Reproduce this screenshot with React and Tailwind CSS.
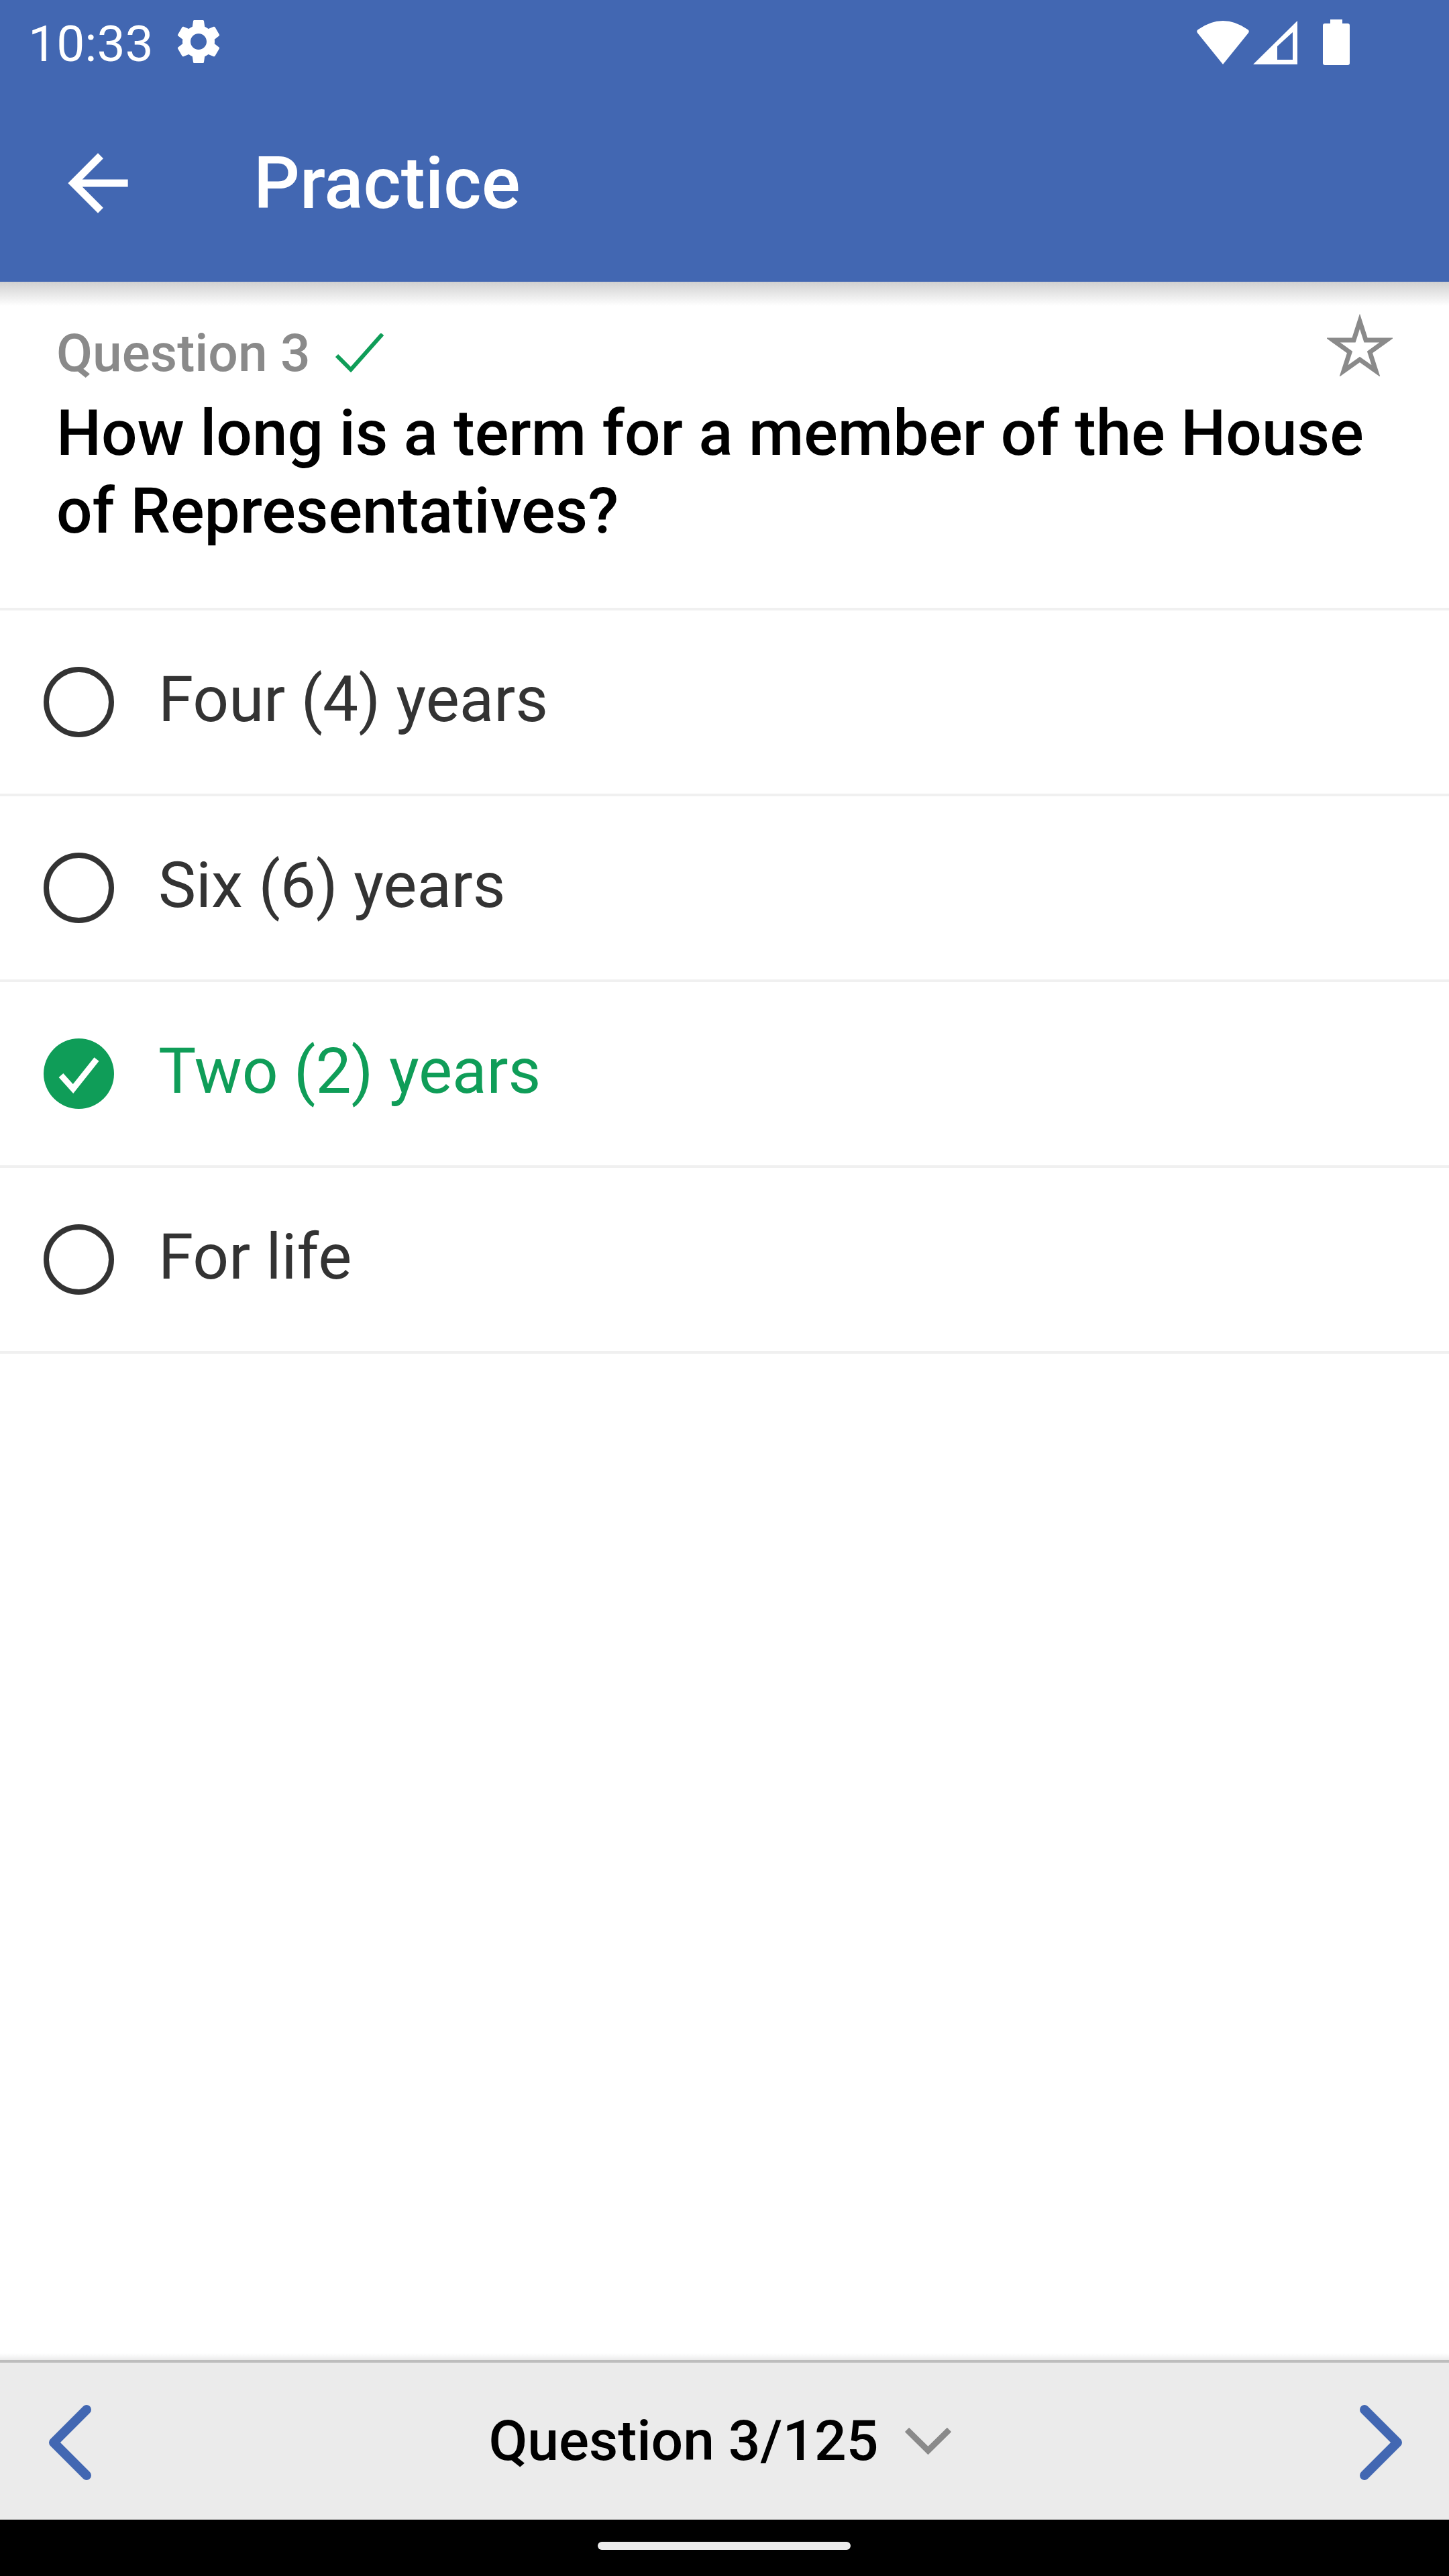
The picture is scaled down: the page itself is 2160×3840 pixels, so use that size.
import React from 'react'

const options = [
  { label: 'Four (4) years' },
  { label: 'Six (6) years' },
  { label: 'Two (2) years', correct: true },
  { label: 'For life' },
]

const StatusBar = () => (
  <div className="flex h-[126px] items-center justify-between pl-[42px] pr-[148px] text-white">
    <div className="flex items-center">
      <span className="mt-[4px] text-[75px] leading-none">10:33</span>
      <svg className="ml-[27px] -mt-[2px] h-[80px] w-[80px]" viewBox="0 0 24 24" fill="currentColor">
        <path d="M19.14 12.94c.04-.3.06-.61.06-.94 0-.32-.02-.64-.07-.94l2.03-1.58c.18-.14.23-.41.12-.61l-1.92-3.32c-.12-.22-.37-.29-.59-.22l-2.39.96c-.5-.38-1.03-.7-1.62-.94l-.36-2.54c-.04-.24-.24-.41-.48-.41h-3.84c-.24 0-.43.17-.47.41l-.36 2.54c-.59.24-1.13.57-1.62.94l-2.39-.96c-.22-.08-.47 0-.59.22L2.74 8.87c-.12.21-.08.47.12.61l2.03 1.58c-.05.3-.09.63-.09.94s.02.64.07.94l-2.03 1.58c-.18.14-.23.41-.12.61l1.92 3.32c.12.22.37.29.59.22l2.39-.96c.5.38 1.03.7 1.62.94l.36 2.54c.05.24.24.41.48.41h3.84c.24 0 .44-.17.47-.41l.36-2.54c.59-.24 1.13-.56 1.62-.94l2.39.96c.22.08.47 0 .59-.22l1.92-3.32c.12-.22.07-.47-.12-.61l-2.01-1.58zM12 15.6c-1.98 0-3.6-1.62-3.6-3.6s1.62-3.6 3.6-3.6 3.6 1.62 3.6 3.6-1.62 3.6-3.6 3.6z" />
      </svg>
    </div>
    <div className="flex items-center">
      <svg className="h-[65px] w-[78px]" viewBox="0 0 78 65" fill="currentColor">
        <path d="M39 65 L1 18 Q-1 15 2 13 Q39 -13 76 13 Q79 15 77 18 Z" />
      </svg>
      <svg className="ml-[6px] h-[65px] w-[66px]" viewBox="0 0 66 65" fill="currentColor">
        <path fillRule="evenodd" d="M0 65 L66 0 V65 Z M36 58 H59 V17 L36 38 Z" />
      </svg>
      <svg className="ml-[38px] h-[68px] w-[40px]" viewBox="0 0 40 68" fill="currentColor">
        <path d="M11 0 H29 V6 H37 Q40 6 40 9 V65 Q40 68 37 68 H3 Q0 68 0 65 V9 Q0 6 3 6 H11 Z" />
      </svg>
    </div>
  </div>
)

const AppBar = () => (
  <div className="relative h-[420px] bg-[#4267b2]">
    <StatusBar />
    <div className="flex h-[294px] items-center pl-[79px] text-white">
      <svg className="h-[134px] w-[134px]" viewBox="0 0 24 24" fill="currentColor">
        <path d="M20 11H7.83l5.59-5.59L12 4l-8 8 8 8 1.41-1.41L7.83 13H20v-2z" />
      </svg>
      <span className="ml-[165px] text-[108px] font-medium leading-none">Practice</span>
    </div>
    {/* shadow under the app bar */}
    <div className="absolute left-0 right-0 top-full h-[36px] bg-gradient-to-b from-[#d0d0d0] to-white/0" />
  </div>
)

const OptionRow = ({ label, correct }) => (
  <div className="flex h-[277px] items-center border-b-4 border-[#f0f0f0] pl-[65px]">
    {correct ? (
      <svg className="h-[105px] w-[105px]" viewBox="0 0 105 105">
        <circle cx="52.5" cy="52.5" r="52.5" fill="#0f9d58" />
        <polyline points="26,55 44,75 79,31" fill="none" stroke="#fff" strokeWidth="9" />
      </svg>
    ) : (
      <div className="h-[105px] w-[105px] rounded-full border-[8px] border-[#333333]" />
    )}
    <span className={`ml-[66px] -mt-[6px] text-[94.5px] leading-none ${correct ? 'text-[#0f9d58]' : 'text-[#333333]'}`}>
      {label}
    </span>
  </div>
)

const BottomBar = () => (
  <div className="relative flex h-[238px] items-center justify-between border-t-4 border-[#bdbdbd] bg-[#ebebeb] pl-[72px] pr-[69px]">
    <div className="absolute bottom-full left-0 right-0 mb-[4px] h-[10px] bg-gradient-to-b from-white/0 to-[#ececec]" />
    <svg className="mt-[3px] h-[112px] w-[64px]" viewBox="0 0 64 112" fill="none" stroke="#4267b2" strokeWidth="14" strokeLinecap="round" strokeLinejoin="round">
      <polyline points="57,7 8,56 57,105" />
    </svg>
    <div className="-ml-[17px] flex items-center">
      <span className="text-[84px] font-medium leading-none text-black">Question 3/125</span>
      <svg className="ml-[39px] h-[40px] w-[69px]" viewBox="0 0 69 40" fill="none" stroke="#8a8a8a" strokeWidth="9">
        <polyline points="3,3 34.5,34 66,3" />
      </svg>
    </div>
    <svg className="mt-[3px] h-[112px] w-[64px]" viewBox="0 0 64 112" fill="none" stroke="#4267b2" strokeWidth="14" strokeLinecap="round" strokeLinejoin="round">
      <polyline points="7,7 56,56 7,105" />
    </svg>
  </div>
)

export default function App() {
  return (
    <div className="flex h-[3840px] w-[2160px] flex-col bg-white font-['Roboto',sans-serif]">
      <AppBar />
      <div className="h-[490px] border-b-4 border-[#f0f0f0] pl-[84px] pr-[84px] pt-[48px]">
        <div className="flex items-start justify-between">
          <div className="mt-[14px] flex items-center">
            <span className="text-[78.5px] font-medium leading-[88px] text-[#8a8a8a]">Question 3</span>
            <svg className="ml-[37px] h-[58px] w-[72px]" viewBox="0 0 72 58" fill="none" stroke="#0f9d58" strokeWidth="6">
              <polyline points="2,33 23,54 70,1" />
            </svg>
          </div>
          <svg className="h-[93px] w-[98px]" viewBox="0 0 98 93" fill="none" stroke="#8a8a8a" strokeWidth="7">
            <polygon points="49,11 58,39 89,39 64,57 73,85 49,68 25,85 34,57 9,39 40,39" />
          </svg>
        </div>
        <p className="mt-[18px] text-[94.5px] font-medium leading-[116px] text-black">
          How long is a term for a member of the House of Representatives?
        </p>
      </div>
      {options.map((option) => (
        <OptionRow key={option.label} {...option} />
      ))}
      <div className="flex-1" />
      <BottomBar />
      <div className="flex h-[84px] items-center justify-center bg-black">
        <div className="-ml-[2px] mt-[-6px] h-[12px] w-[377px] rounded-full bg-[#ebebeb]" />
      </div>
    </div>
  )
}
